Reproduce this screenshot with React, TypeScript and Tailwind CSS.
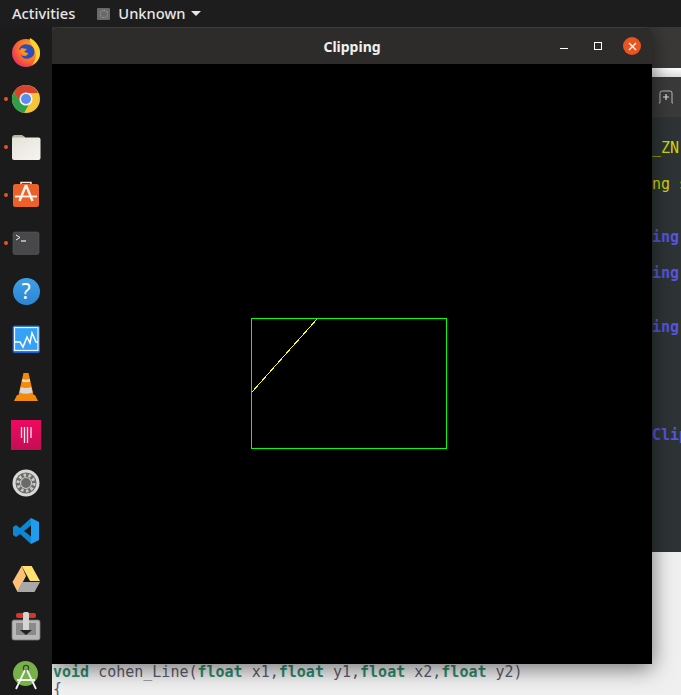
import React from 'react';

const Firefox = () => (
    <svg width="32" height="32" viewBox="0 0 32 32">
        <defs>
            <radialGradient id="ffBody" cx="0.65" cy="0.35" r="0.8">
                <stop offset="0" stopColor="#ffb52e" />
                <stop offset="0.55" stopColor="#ff6a2a" />
                <stop offset="1" stopColor="#d8207a" />
            </radialGradient>
        </defs>
        <circle cx="16" cy="18" r="14" fill="url(#ffBody)" />
        <path d="M9 15 C10 10 15 8 20 10 C25 12 26 19 22 22 C18 25 12 24 11 20 C14 22 18 21 18 18 C15 18 12 17 13 15 C11 14.5 10 14.5 9 15Z" fill="#2a4fb5" />
        <path d="M20 3 C26 6 30 12 30 18 C30 24 26 28 22 30 C26 25 27 18 24 13 C22 10 19 7 20 3Z" fill="#ffd22e" />
        <path d="M11 13 L17 14 L14 17 L18 18 L14 20 L10 17Z" fill="#ff8f2a" />
    </svg>
);

const Chrome = () => (
    <svg width="32" height="32" viewBox="0 0 32 32">
        <circle cx="16" cy="16" r="14" fill="#f4c534" />
        <path d="M16 2 A14 14 0 0 0 3.9 9 L9.5 19 L16 10 H28.1 A14 14 0 0 0 16 2Z" fill="#d8432f" />
        <path d="M3.9 9 A14 14 0 0 0 14 29.9 L20 19.5 L10 19Z" fill="#2f9e4a" />
        <circle cx="16" cy="16" r="6.6" fill="#f2f2f2" />
        <circle cx="16" cy="16" r="5" fill="#5b8def" />
    </svg>
);

const Files = () => (
    <svg width="32" height="32" viewBox="0 0 32 32">
        <defs>
            <linearGradient id="filesBody" x1="0" y1="0" x2="1" y2="1">
                <stop offset="0" stopColor="#e4e1d8" />
                <stop offset="1" stopColor="#f6f5f1" />
            </linearGradient>
        </defs>
        <path d="M2 7 Q2 4 5 4 H12 L15 6 V10 H2Z" fill="#b9b4a4" />
        <rect x="2" y="6.5" width="28.5" height="22.5" rx="2" fill="url(#filesBody)" />
    </svg>
);

const Store = () => (
    <svg width="32" height="32" viewBox="0 0 32 32">
        <path d="M11 7 V3.5 H21 V7" fill="none" stroke="#f3e6da" strokeWidth="1.5" />
        <rect x="3" y="5" width="26" height="23" rx="2.5" fill="#e9622a" />
        <path d="M16 6 L9.5 22 M16 6 L22.5 22" stroke="#fdf3ec" strokeWidth="2.4" fill="none" />
        <path d="M5 17.5 H27" stroke="#fdf3ec" strokeWidth="1.8" />
    </svg>
);

const Terminal = () => (
    <svg width="32" height="32" viewBox="0 0 32 32">
        <rect x="3" y="5" width="26" height="22.5" rx="2" fill="#48484a" stroke="#5a5a5a" strokeWidth="0.6" />
        <path d="M6 8 L10 10.5 L6 13" fill="none" stroke="#eeeeee" strokeWidth="1" />
        <path d="M11 14 H16" stroke="#eeeeee" strokeWidth="1.2" />
    </svg>
);

const Help = () => (
    <div className="flex h-[27px] w-[27px] items-center justify-center rounded-full bg-gradient-to-b from-[#3f9fe6] to-[#2a86d4] font-['Noto_Sans',sans-serif] text-[21px] leading-none text-white">
        ?
    </div>
);

const Monitor = () => (
    <svg width="32" height="32" viewBox="0 0 32 32">
        <rect x="2.5" y="2.5" width="27.5" height="27.5" rx="2" fill="#1565d8" />
        <rect x="4.5" y="4.5" width="23.5" height="23" fill="#35a2f5" stroke="#e8f4ff" strokeWidth="1.3" />
        <path d="M5 19 H10 L13 24 L17 14 L20 20 L22 10 L26 19 H28" fill="none" stroke="#ffffff" strokeWidth="1.5" />
    </svg>
);

const Vlc = () => (
    <svg width="32" height="32" viewBox="0 0 32 32">
        <path d="M4 30 L7 24 H25 L28 30Z" fill="#f08a0c" />
        <path d="M13.5 2 H18.5 L24 26 Q16 29 8 26Z" fill="#f58a0a" />
        <path d="M12.4 8 Q16 9.5 19.6 8 L20.2 10.5 Q16 12 11.8 10.5Z" fill="#f0d8b0" />
        <path d="M10.8 16 Q16 18 21.2 16 L22.5 21.5 Q16 24 9.5 21.5Z" fill="#d8d8d8" />
    </svg>
);

const Pink = () => (
    <div className="flex h-[30px] w-[30px] items-center justify-center bg-gradient-to-b from-[#f0085f] to-[#c40d55]">
        <svg width="30" height="30" viewBox="0 0 30 30">
            <path d="M10.5 7 V18 M13.5 7 V23 M16.5 7 V23 M20 7 V18" stroke="#ffffff" strokeWidth="1.3" opacity="0.9" />
        </svg>
    </div>
);

const Settings = () => (
    <svg width="32" height="32" viewBox="0 0 32 32">
        <circle cx="16" cy="16" r="13.5" fill="#d8d8d6" />
        <circle cx="16" cy="16" r="10.5" fill="#6a6a68" />
        <circle cx="16" cy="16" r="8" fill="none" stroke="#c8c8c6" strokeWidth="3" strokeDasharray="2.6 2.4" />
        <circle cx="16" cy="16" r="5.5" fill="#6a6a68" stroke="#c8c8c6" strokeWidth="1.2" />
    </svg>
);

const VsCode = () => (
    <svg width="32" height="32" viewBox="0 0 32 32">
        <path d="M21 3 L10 13 L6 10 L3 12 V20 L6 22 L10 19 L21 29 V21.5 L14 16 L21 10.5Z" fill="#0e86d4" />
        <path d="M21 3 L29 7 V25 L21 29Z" fill="#1f9cf0" />
    </svg>
);

const Drive = () => (
    <svg width="32" height="32" viewBox="0 0 32 32">
        <path d="M11.7 3 H21.7 L30 18 H20Z" fill="#ffe070" />
        <path d="M11.7 3 L2.5 19 L7.5 29 L16 13Z" fill="#ffc078" />
        <path d="M12 19 H30 L24.5 29 H7.5Z" fill="#a8a8a8" />
    </svg>
);

const Transmission = () => (
    <svg width="32" height="32" viewBox="0 0 32 32">
        <rect x="2" y="9" width="28" height="20" rx="2" fill="#b8b8b8" stroke="#777777" strokeWidth="0.8" />
        <rect x="6" y="12" width="20" height="12" fill="#8a8a8a" />
        <rect x="6" y="2" width="20" height="5" rx="2" fill="#d8342c" />
        <rect x="13" y="1" width="6" height="19" rx="1.5" fill="#d4d4d0" />
        <path d="M10 19 H22 L16 24Z" fill="#222222" />
    </svg>
);

const Android = () => (
    <svg width="32" height="32" viewBox="0 0 32 32">
        <circle cx="15.5" cy="14.5" r="12.5" fill="#78b04a" />
        <circle cx="16" cy="9" r="2.6" fill="none" stroke="#3b4a30" strokeWidth="1.4" />
        <path d="M15 11 L6 30 M17 11 L26 30 M7 21 H25" stroke="#f2f2f2" strokeWidth="1.8" fill="none" />
    </svg>
);

const dockItems = [
    { icon: <Firefox />, running: false },
    { icon: <Chrome />, running: true },
    { icon: <Files />, running: true },
    { icon: <Store />, running: true },
    { icon: <Terminal />, running: true },
    { icon: <Help />, running: false },
    { icon: <Monitor />, running: false },
    { icon: <Vlc />, running: false },
    { icon: <Pink />, running: false },
    { icon: <Settings />, running: false },
    { icon: <VsCode />, running: false },
    { icon: <Drive />, running: false },
    { icon: <Transmission />, running: false },
    { icon: <Android />, running: false },
];

const Dock = () => (
    <div className="flex h-[668px] w-[52px] shrink-0 flex-col overflow-hidden bg-[#1b1b1b]">
        {dockItems.map((item, index) => (
            <div key={index} className="relative flex h-12 w-full shrink-0 items-center justify-center">
                {item.running && <span className="absolute left-[4px] top-[22px] h-1 w-1 rounded-full bg-[#e95420]" />}
                {item.icon}
            </div>
        ))}
    </div>
);

const TopBar = () => (
    <div className="flex h-[27px] shrink-0 items-center bg-[#1d1d1d] pl-3 font-['Noto_Sans',sans-serif] text-[14.7px] font-medium text-[#e6e6e6]">
        <span>Activities</span>
        <span className="ml-[22px] flex h-3 w-[13px] items-center justify-center rounded-[1px] bg-[#6a6a6a]">
            <span className="h-2 w-2 rounded-full border border-dotted border-[#a8a8a8]" />
        </span>
        <span className="ml-[8px]">Unknown</span>
        <span className="ml-[5px] h-0 w-0 border-x-[5px] border-t-[5px] border-x-transparent border-t-[#e6e6e6]" />
    </div>
);

const Clipping = () => (
    <svg width="600" height="600" viewBox="0 0 600 600" shapeRendering="crispEdges">
        <rect x="199.5" y="254.5" width="195" height="130" fill="none" stroke="#00ff00" strokeWidth="1" />
        <line x1="200" y1="328" x2="265" y2="255" stroke="#ffff00" strokeWidth="1" />
    </svg>
);

const ClippingWindow = () => (
    <div className="absolute left-0 top-0 flex h-[637px] w-[600px] flex-col overflow-hidden rounded-t-[7px] shadow-[0_4px_22px_rgba(0,0,0,0.55)]">
        <div className="relative flex h-[37px] shrink-0 items-center justify-center border-t border-[#3d3b39] bg-[#2e2c2b] font-['Noto_Sans',sans-serif] text-[14px] font-bold text-[#f0f0f0]">
            Clipping
            <span className="absolute left-[508px] top-[20px] h-px w-2 bg-white" />
            <span className="absolute left-[542px] top-[14px] h-2 w-2 border border-white" />
            <span className="absolute left-[571px] top-[9px] flex h-[18px] w-[18px] items-center justify-center rounded-full bg-[#e95420]">
                <svg width="9" height="9" viewBox="0 0 9 9">
                    <path d="M1 1 L8 8 M8 1 L1 8" stroke="#ffffff" strokeWidth="1.3" />
                </svg>
            </span>
        </div>
        <div className="flex-1 bg-black">
            <Clipping />
        </div>
    </div>
);

const editorLines = [
    { text: '_ZN', cls: 'mt-[23px] text-[#d2d800]' },
    { text: 'ng s', cls: 'mt-[19px] text-[#d2d800]' },
    { text: 'ing,', cls: 'mt-[36px] text-[#5555e0] font-bold' },
    { text: 'ing,', cls: 'mt-[19px] text-[#5555e0] font-bold' },
    { text: 'ing,', cls: 'mt-[37px] text-[#5555e0] font-bold' },
    { text: 'Clip', cls: 'mt-[91px] text-[#5555e0] font-bold' },
];

const Desktop = () => (
    <div className="relative flex h-[668px] flex-1 flex-col overflow-hidden bg-[#f0f0f0] font-['DejaVu_Sans_Mono',monospace] text-[15px] leading-[17px]">
        <div className="h-[41px] shrink-0 bg-[#3b3937]" />
        <div className="h-[9px] shrink-0 bg-gradient-to-b from-[#ffffff] to-[#dcdcdc]" />
        <div className="flex h-[40px] shrink-0 items-center bg-[#3a3a3a] pl-[606px]">
            <svg width="16" height="14" viewBox="0 0 16 14">
                <path d="M1 13 H2 V3 Q2 1 4 1 H12 Q14 1 14 3 V13 H15" fill="none" stroke="#b8b8b8" strokeWidth="1" />
                <path d="M8 4 V10 M5 7 H11" stroke="#e0e0e0" strokeWidth="1.2" />
            </svg>
        </div>
        <div className="flex h-[435px] shrink-0 flex-col whitespace-nowrap bg-[#2e3436] pl-[600px]">
            {editorLines.map((line, index) => (
                <div key={index} className={line.cls}>
                    {line.text}
                </div>
            ))}
        </div>
        <div className="whitespace-nowrap pl-px pt-[112px] text-[#5c5c6e]">
            <div>
                <b className="text-[#2e8b6f]">void</b> cohen_Line(<b className="text-[#2e8b6f]">float</b> x1,
                <b className="text-[#2e8b6f]">float</b> y1,<b className="text-[#2e8b6f]">float</b> x2,
                <b className="text-[#2e8b6f]">float</b> y2)
            </div>
            <div>{'{'}</div>
        </div>
        <ClippingWindow />
    </div>
);

const App: React.FC = () => {
    return (
        <div className="flex h-[695px] w-[681px] flex-col overflow-hidden bg-[#1b1b1b]">
            <TopBar />
            <div className="flex flex-1">
                <Dock />
                <Desktop />
            </div>
        </div>
    );
};

export default App;
